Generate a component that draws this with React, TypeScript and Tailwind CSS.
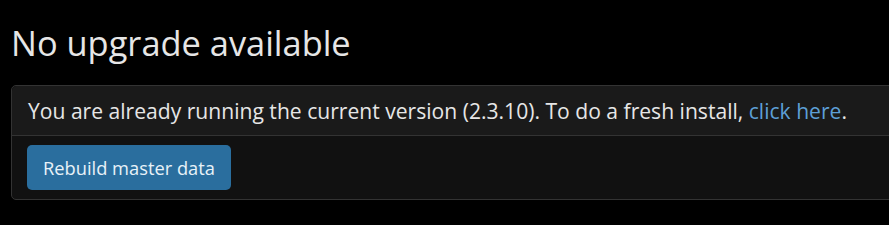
export default function App() {
  return (
    <div className="min-h-[225px] bg-black px-[11px] pt-[23px] text-[#e6e6e6]" style={{ fontFamily: '"Open Sans", "Noto Sans", sans-serif' }}>
      <h1 className="text-[34.4px] leading-[40px] font-normal mb-[22px] pl-[0px]">No upgrade available</h1>
      <div className="-mr-[20px] rounded-[5px] border border-[#333] bg-[#111]">
        <div className="h-[50px] flex items-center px-[16px] bg-[#1a1a1a] border-b border-[#333] rounded-t-[5px] text-[21.1px] whitespace-nowrap">
          You are already running the current version (2.3.10). To do a fresh install,&nbsp;<a className="text-[#5d9fd6]">click here</a>.
        </div>
        <div className="px-[15px] py-[9px]">
          <button className="h-[45px] px-[16px] rounded-[5px] bg-[#2a6e9e] text-[18.3px] text-[#e8f2f8]">Rebuild master data</button>
        </div>
      </div>
    </div>
  );
}
